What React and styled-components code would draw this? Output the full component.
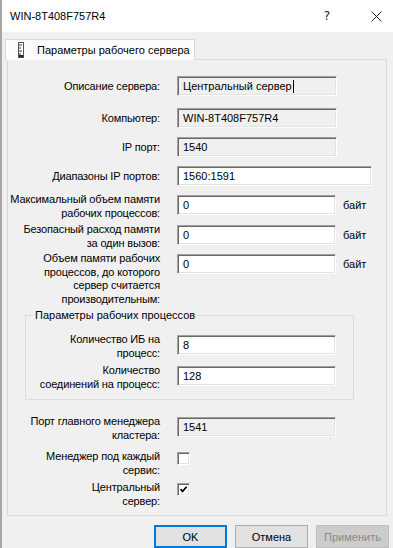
import styled, { createGlobalStyle } from "styled-components";

const GlobalStyle = createGlobalStyle`
  html, body {
    margin: 0;
    padding: 0;
  }
  body {
    width: 393px;
    height: 548px;
    overflow: hidden;
    background: #f0f0f0;
    font-family: "Liberation Sans", Arial, sans-serif;
    font-size: 11px;
    color: #000;
  }
`;

const Window = styled.div`
  width: 393px;
  height: 548px;
  box-sizing: border-box;
  border-left: 2px solid #a6a6a6;
  background: #f0f0f0;
  display: flex;
  flex-direction: column;
`;

const TitleBar = styled.div`
  height: 32px;
  flex-shrink: 0;
  background: #fff;
  display: flex;
  align-items: center;
  padding: 0 7px 0 8px;
  font-size: 11px;
`;

const Title = styled.span`
  flex: 1;
  color: #000;
`;

const TitleButton = styled.span`
  width: 20px;
  height: 20px;
  display: flex;
  align-items: center;
  justify-content: center;
  margin-left: ${(p) => p.$ml || 0}px;
  font-family: "DejaVu Sans", sans-serif;
  font-size: 12px;
  color: #222;
`;

const Body = styled.div`
  padding: 7px 5px 0 5px;
  display: flex;
  flex-direction: column;
  align-items: flex-start;
`;

const Tab = styled.div`
  position: relative;
  z-index: 1;
  margin-left: -2px;
  margin-bottom: -1px;
  width: 190px;
  height: 21px;
  box-sizing: border-box;
  border: 1px solid #d9d9d9;
  border-bottom: none;
  background: #fcfcfc;
  display: flex;
  align-items: center;
  padding-left: 11px;
  gap: 12px;
`;

const Page = styled.div`
  width: 380px;
  height: 457px;
  box-sizing: border-box;
  border: 1px solid #d9d9d9;
  background: #f0f0f0;
  padding-top: 16px;
`;

const Row = styled.div`
  display: flex;
  align-items: flex-start;
  margin-top: ${(p) => p.$mt || 0}px;
`;

const LabelBox = styled.div`
  width: ${(p) => p.$w || 152}px;
  flex-shrink: 0;
  display: flex;
  flex-direction: column;
  align-items: flex-end;
  white-space: nowrap;
  letter-spacing: -0.15px;
  line-height: 13.5px;
  margin-top: ${(p) => (p.$check ? 0 : p.$multi ? -2 : 3.5)}px;
  margin-right: 17px;
`;

const Line = styled.span``;

const Label = ({ text, ...rest }) => {
  const lines = text.split("\n");
  return (
    <LabelBox $multi={lines.length > 1} {...rest}>
      {lines.map((l) => (
        <Line key={l}>{l}</Line>
      ))}
    </LabelBox>
  );
};

const Field = styled.div`
  width: ${(p) => p.$w || 159}px;
  height: 20px;
  box-sizing: border-box;
  border: 1px solid;
  border-color: #a0a0a0 #fff #fff #a0a0a0;
  box-shadow: inset 1px 1px 0 #696969, inset -1px -1px 0 #e3e3e3;
  background: ${(p) => (p.$ro ? "#f0f0f0" : "#fff")};
  padding-left: 5px;
  display: flex;
  align-items: center;
  white-space: nowrap;
`;

const Caret = styled.span`
  width: 1px;
  height: 13px;
  background: #000;
  margin-left: 1px;
`;

const Unit = styled.span`
  margin-left: 7px;
  line-height: 20px;
`;

const Group = styled.fieldset`
  margin: 3px 0 0 17px;
  width: 329px;
  box-sizing: border-box;
  padding: 0 0 8px 0;
  border: 1px solid #dcdcdc;
  min-inline-size: 0;
`;

const Legend = styled.legend`
  margin-left: 7px;
  padding: 0 2px;
  line-height: 13px;
`;

const Check = styled.span`
  width: 13px;
  height: 13px;
  box-sizing: border-box;
  margin-top: ${(p) => p.$mt || 2}px;
  border: 1px solid;
  border-color: #a0a0a0 #fff #fff #a0a0a0;
  box-shadow: inset 1px 1px 0 #696969, inset -1px -1px 0 #e3e3e3;
  background: #fff;
  display: flex;
  align-items: center;
  justify-content: center;
`;

const ButtonBar = styled.div`
  display: flex;
  gap: 8px;
  margin-top: 9px;
  align-self: flex-end;
  margin-right: -1px;
`;

const Button = styled.div`
  width: 73px;
  height: 23px;
  box-sizing: border-box;
  display: flex;
  align-items: center;
  justify-content: center;
  background: ${(p) => (p.$disabled ? "#cccccc" : "#e1e1e1")};
  color: ${(p) => (p.$disabled ? "#8a8a8a" : "#000")};
  border: ${(p) =>
    p.$default ? "2px solid #0078d7" : p.$disabled ? "1px solid #bfbfbf" : "1px solid #adadad"};
`;

const TabIcon = () => (
  <svg width="8" height="16" viewBox="0 0 8 16">
    <rect x="1.5" y="0.5" width="5" height="15" fill="#fff" stroke="#555" />
    <path d="M2 3h3M2 6h2M2 9h3M2 12h2" stroke="#333" strokeWidth="1" />
    <rect x="2" y="13" width="4" height="2" fill="#222" />
  </svg>
);

const CloseIcon = () => (
  <svg width="11" height="11" viewBox="0 0 11 11">
    <path d="M0.5 0.5L10.5 10.5M10.5 0.5L0.5 10.5" stroke="#222" strokeWidth="1" />
  </svg>
);

const Tick = () => (
  <svg width="9" height="9" viewBox="0 0 9 9">
    <path d="M1.5 4.2L3.6 6.4L7.6 1.8" fill="none" stroke="#000" strokeWidth="1.7" />
  </svg>
);

const App = () => {
  return (
    <>
      <GlobalStyle />
      <Window>
        <TitleBar>
          <Title>WIN-8T408F757R4</Title>
          <TitleButton>?</TitleButton>
          <TitleButton $ml={29}>
            <CloseIcon />
          </TitleButton>
        </TitleBar>
        <Body>
          <Tab>
            <TabIcon />
            <span>Параметры рабочего сервера</span>
          </Tab>
          <Page>
            <Row>
              <Label text="Описание сервера:" />
              <Field $ro $w={160}>
                Центральный сервер
                <Caret />
              </Field>
            </Row>
            <Row $mt={12}>
              <Label text="Компьютер:" />
              <Field $ro $w={160}>WIN-8T408F757R4</Field>
            </Row>
            <Row $mt={9}>
              <Label text="IP порт:" />
              <Field $ro $w={160}>1540</Field>
            </Row>
            <Row $mt={9}>
              <Label text="Диапазоны IP портов:" />
              <Field $w={195}>1560:1591</Field>
            </Row>
            <Row $mt={9}>
              <Label text={"Максимальный объем памяти\nрабочих процессов:"} />
              <Field>0</Field>
              <Unit>байт</Unit>
            </Row>
            <Row $mt={5}>
              <Label text={"Безопасный расход памяти\nза один вызов:"} />
              <Field>0</Field>
              <Unit>байт</Unit>
            </Row>
            <Row $mt={4}>
              <Label
                text={"Объем памяти рабочих\nпроцессов, до которого\nсервер считается\nпроизводительным:"}
              />
              <Field>0</Field>
              <Unit>байт</Unit>
            </Row>
            <Group>
              <Legend>Параметры рабочих процессов</Legend>
              <Row $mt={13}>
                <Label $w={134} text={"Количество ИБ на\nпроцесс:"} />
                <Field>8</Field>
              </Row>
              <Row $mt={6}>
                <Label $w={134} text={"Количество\nсоединений на процесс:"} />
                <Field>128</Field>
              </Row>
            </Group>
            <Row $mt={17}>
              <Label text={"Порт главного менеджера\nкластера:"} />
              <Field $ro>1541</Field>
            </Row>
            <Row $mt={8}>
              <Label $check text={"Менеджер под каждый\nсервис:"} />
              <Check />
            </Row>
            <Row $mt={4}>
              <Label $check text={"Центральный\nсервер:"} />
              <Check $mt={2}>
                <Tick />
              </Check>
            </Row>
          </Page>
          <ButtonBar>
            <Button $default>OK</Button>
            <Button>Отмена</Button>
            <Button $disabled>Применить</Button>
          </ButtonBar>
        </Body>
      </Window>
    </>
  );
};

export default App;
